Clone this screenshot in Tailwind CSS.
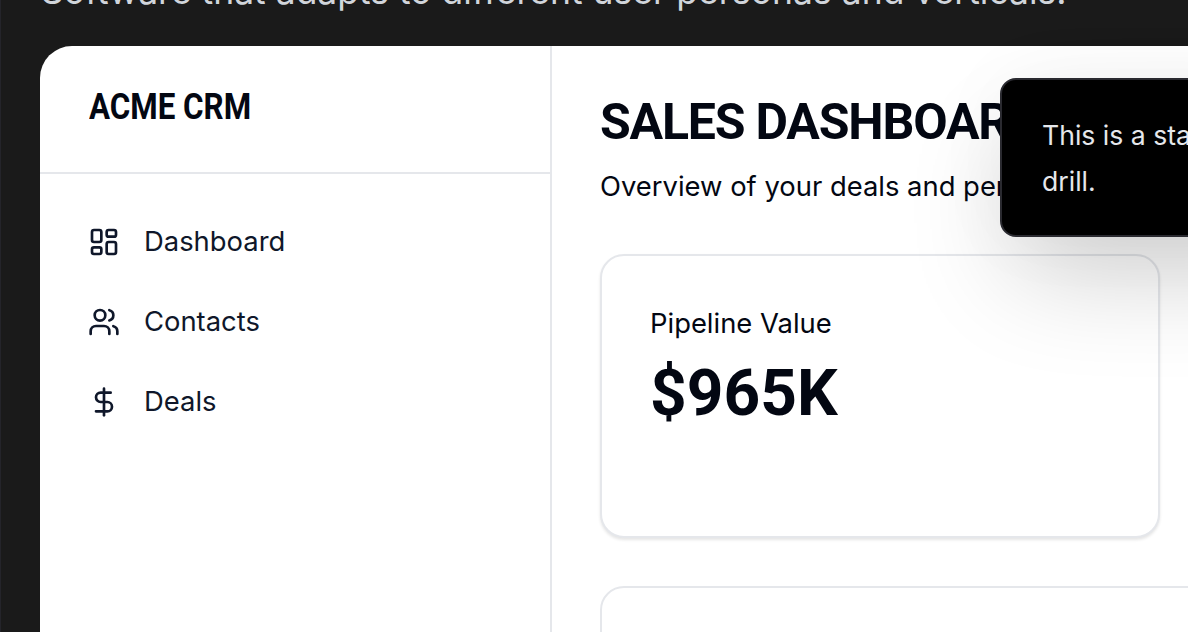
<!DOCTYPE html>
<html lang="en">
<head>
<meta charset="utf-8">
<title>Acme CRM</title>
<script src="https://cdn.jsdelivr.net/npm/@tailwindcss/browser@4"></script>
</head>
<body class="m-0 bg-[#1a1a1a]">
<div class="relative h-[632px] w-[1188px] overflow-hidden border-l border-l-[#24242a] bg-[#1a1a1a] font-['Inter',sans-serif]">
  <p class="-mt-[30px] ml-[40px] h-[76px] whitespace-nowrap text-[35.5px] leading-[44px] text-[#d1d5db]">Software that adapts to different user personas and verticals.</p>
  <div class="ml-[39px] flex h-[700px] w-[1300px] overflow-hidden rounded-tl-[32px] bg-white text-[#030712]">
    <aside class="w-[512px] shrink-0 border-r-2 border-r-[#e5e7eb]">
      <div class="flex h-[128px] items-start border-b-2 border-b-[#e5e7eb] pl-[49px] pt-[39px]">
        <span class="origin-left scale-x-[0.87] font-['Roboto',sans-serif] text-[36px] leading-[44px] font-bold">ACME CRM</span>
      </div>
      <nav class="flex flex-col gap-[32px] pl-[48px] pt-[43px] leading-[48px] text-[#0f172a]">
        <a class="flex items-center gap-[24px]">
          <svg class="mt-[2px] size-[32px]" viewBox="0 0 24 24" fill="none" stroke="currentColor" stroke-width="2" stroke-linecap="round" stroke-linejoin="round"><rect width="7" height="9" x="3" y="3" rx="1.5"/><rect width="7" height="5" x="14" y="3" rx="1.5"/><rect width="7" height="9" x="14" y="12" rx="1.5"/><rect width="7" height="5" x="3" y="16" rx="1.5"/></svg>
          <span class="text-[27.4px]">Dashboard</span>
        </a>
        <a class="flex items-center gap-[24px]">
          <svg class="mt-[2px] size-[32px]" viewBox="0 0 24 24" fill="none" stroke="currentColor" stroke-width="2" stroke-linecap="round" stroke-linejoin="round"><path d="M16 21v-2a4 4 0 0 0-4-4H6a4 4 0 0 0-4 4v2"/><circle cx="9" cy="7" r="4"/><path d="M22 21v-2a4 4 0 0 0-3-3.87"/><path d="M16 3.13a4 4 0 0 1 0 7.75"/></svg>
          <span class="text-[27.4px]">Contacts</span>
        </a>
        <a class="flex items-center gap-[24px]">
          <svg class="mt-[2px] size-[32px]" viewBox="0 0 24 24" fill="none" stroke="currentColor" stroke-width="2" stroke-linecap="round" stroke-linejoin="round"><line x1="12" x2="12" y1="2" y2="22"/><path d="M17 5H9.5a3.5 3.5 0 0 0 0 7h5a3.5 3.5 0 0 1 0 7H6"/></svg>
          <span class="text-[27.4px]">Deals</span>
        </a>
      </nav>
    </aside>
    <main class="flex-1 pl-[48px] pt-[48px]">
      <h1 class="font-['Roboto',sans-serif] text-[50px] leading-[56px] font-bold tracking-[-1.2px] whitespace-nowrap">SALES DASHBOARD</h1>
      <p class="mt-[16px] text-[27.4px] leading-[40px] whitespace-nowrap">Overview of your deals and performance</p>
      <section class="mt-[48px] h-[284px] w-[560px] rounded-[24px] border-2 border-[#e5e7eb] bg-white pl-[48px] pt-[47px] shadow-[0_2px_3px_rgba(0,0,0,0.1)]">
        <p class="text-[27.4px] leading-[40px]">Pipeline Value</p>
        <p class="mt-[15px] font-['Roboto',sans-serif] text-[64px] leading-[72px] font-bold">$965K</p>
      </section>
      <section class="mt-[48px] h-[284px] w-[700px] rounded-[24px] border-2 border-[#e5e7eb] bg-white"></section>
    </main>
  </div>
  <div class="absolute left-[999px] top-[78px] h-[159px] w-[560px] rounded-[16px] border-2 border-[#2a2a30] bg-black px-[40px] pt-[32px] text-[26.6px] leading-[46px] text-[#e5e7eb] shadow-[0_50px_110px_-16px_rgba(0,0,0,0.2),0_0_80px_rgba(0,0,0,0.04)]">This is a standard tooltip for the<br>drill.</div>
</div>
</body>
</html>
